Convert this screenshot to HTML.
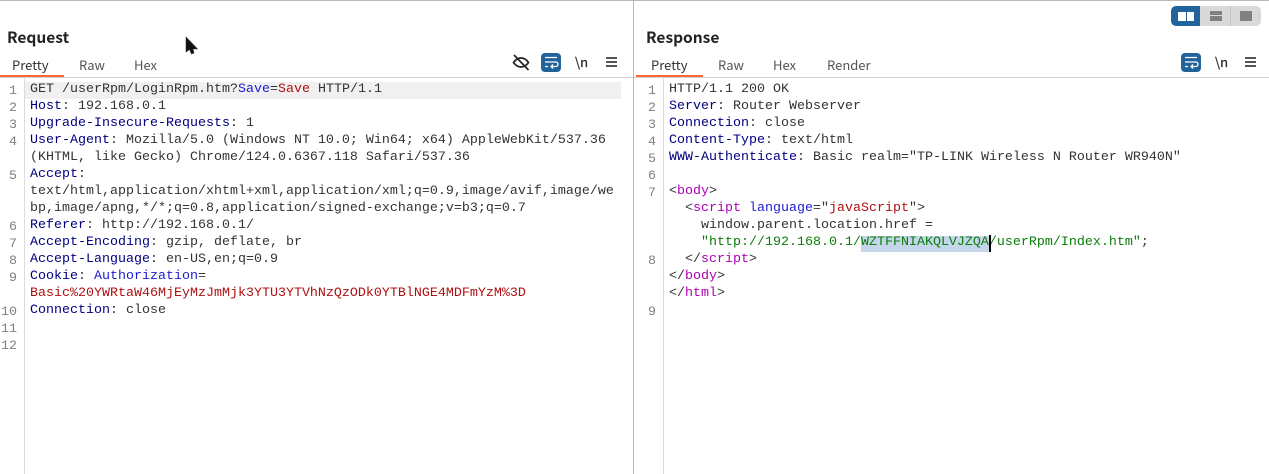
<!DOCTYPE html>
<html><head><meta charset="utf-8">
<style>
html,body{margin:0;padding:0;background:#fff;width:1269px;height:474px;overflow:hidden}
body{position:relative;font-family:"Noto Sans CJK JP","Liberation Sans",sans-serif}
.a{position:absolute}
.l{position:absolute;font:13.33px/17px "Liberation Mono",monospace;color:#333;white-space:pre;height:17px}
.n{position:absolute;font:13.33px/17px "Liberation Mono",monospace;color:#808080;text-align:right;width:16px}
.h{color:#000080}.b{color:#1c1cd0}.r{color:#b01010}.g{color:#0a7d0a}.p{color:#b000b8}
.t{position:absolute;font-family:"Noto Sans CJK JP","Liberation Sans",sans-serif;font-size:13px;line-height:16px;color:#555;top:57px}
.ti{position:absolute;font-family:"Noto Sans CJK JP","Liberation Sans",sans-serif;font-weight:bold;font-size:15.5px;line-height:18px;color:#222;top:28px}
.s{position:absolute;font:13px/17px "Noto Sans CJK JP","Liberation Sans",sans-serif;color:#222;-webkit-text-stroke:.2px #222}
</style></head><body>
<div class="a" style="left:0;top:0;width:1269px;height:1px;background:#b9b9b9"></div>
<div class="a" style="left:633px;top:0;width:1px;height:474px;background:#b9b9b9"></div>
<div class="a" style="left:0;top:77px;width:633px;height:1px;background:#d4d4d4"></div>
<div class="a" style="left:634px;top:77px;width:635px;height:1px;background:#d4d4d4"></div>
<div class="a" style="left:24px;top:78px;width:1px;height:396px;background:#dcdcdc"></div>
<div class="a" style="left:663px;top:78px;width:1px;height:396px;background:#dcdcdc"></div>

<div class="ti" style="left:7px">Request</div>
<div class="ti" style="left:646px">Response</div>

<div class="t" style="left:12px;color:#333">Pretty</div>
<div class="t" style="left:79px">Raw</div>
<div class="t" style="left:134px">Hex</div>
<div class="a" style="left:0;top:75px;width:64px;height:2px;background:#ff6633"></div>
<div class="t" style="left:651px;color:#333">Pretty</div>
<div class="t" style="left:718px">Raw</div>
<div class="t" style="left:773px">Hex</div>
<div class="t" style="left:827px">Render</div>
<div class="a" style="left:636px;top:75px;width:67px;height:2px;background:#ff6633"></div>

<!-- cursor -->
<svg class="a" style="left:185px;top:36px" width="14" height="20" viewBox="0 0 14 20"><path d="M1 1 L1 16 L4.500 13.500 L6.500 18 L9 17 L8 13 L12.500 13 Z" fill="#111" stroke="#333" stroke-width=".6"/></svg>

<!-- layout toggle -->
<div class="a" style="left:1171px;top:6px;width:90px;height:20px;border-radius:5px;background:#d9d9d9"></div>
<div class="a" style="left:1171px;top:6px;width:29px;height:20px;border-radius:5px 0 0 5px;background:#23639c"></div>
<div class="a" style="left:1230px;top:6px;width:1px;height:20px;background:#c6c6c6"></div>
<div class="a" style="left:1178px;top:12px;width:8px;height:9px;background:#fff"></div>
<div class="a" style="left:1187px;top:12px;width:7px;height:9px;background:#fff"></div>
<div class="a" style="left:1210px;top:11px;width:12px;height:4px;background:#808080"></div>
<div class="a" style="left:1210px;top:16px;width:12px;height:5px;background:#808080"></div>
<div class="a" style="left:1240px;top:11px;width:12px;height:10px;background:#808080"></div>

<!-- left icons -->
<svg class="a" style="left:512px;top:53px" width="18" height="18" viewBox="0 0 18 18" fill="none" stroke="#222" stroke-width="1.700"><path d="M1.500 9.500 C4 6 6.500 5 9 5 C11.500 5 14 6 16.500 9.500 C14 13 11.500 14 9 14 C6.500 14 4 13 1.500 9.500 Z"/><path d="M2 2 L16.500 17" stroke-width="1.700"/></svg>
<svg class="a" style="left:541px;top:53px" width="20" height="19" viewBox="0 0 20 19"><rect width="20" height="19" rx="4" fill="#23639c"/><path d="M4 4.500 H16 M4 9 H15 C17.500 9 17.500 13.500 15 13.500 H10 M12 11.500 L10 13.500 L12 15.500 M4 13.500 H7" fill="none" stroke="#fff" stroke-width="1.300"/></svg>
<div class="s" style="left:575px;top:53px">\n</div>
<div class="a" style="left:606px;top:57px;width:11px;height:2px;background:#555"></div>
<div class="a" style="left:606px;top:61px;width:11px;height:2px;background:#555"></div>
<div class="a" style="left:606px;top:65px;width:11px;height:2px;background:#555"></div>

<!-- right icons -->
<svg class="a" style="left:1181px;top:53px" width="20" height="19" viewBox="0 0 20 19"><rect width="20" height="19" rx="4" fill="#23639c"/><path d="M4 4.500 H16 M4 9 H15 C17.500 9 17.500 13.500 15 13.500 H10 M12 11.500 L10 13.500 L12 15.500 M4 13.500 H7" fill="none" stroke="#fff" stroke-width="1.300"/></svg>
<div class="s" style="left:1215px;top:53px">\n</div>
<div class="a" style="left:1245px;top:57px;width:11px;height:2px;background:#555"></div>
<div class="a" style="left:1245px;top:61px;width:11px;height:2px;background:#555"></div>
<div class="a" style="left:1245px;top:65px;width:11px;height:2px;background:#555"></div>

<!-- request -->
<div class="a" style="left:25px;top:82px;width:596px;height:17px;background:#f0f0f0"></div>
<div class="n" style="left:1px;top:83px">1</div>
<div class="n" style="left:1px;top:100px">2</div>
<div class="n" style="left:1px;top:117px">3</div>
<div class="n" style="left:1px;top:134px">4</div>
<div class="n" style="left:1px;top:168px">5</div>
<div class="n" style="left:1px;top:219px">6</div>
<div class="n" style="left:1px;top:236px">7</div>
<div class="n" style="left:1px;top:253px">8</div>
<div class="n" style="left:1px;top:270px">9</div>
<div class="n" style="left:1px;top:304px">10</div>
<div class="n" style="left:1px;top:321px">11</div>
<div class="n" style="left:1px;top:338px">12</div>

<div class="l" style="left:30px;top:81px">GET /userRpm/LoginRpm.htm?<span class="b">Save</span>=<span class="r">Save</span> HTTP/1.1</div>
<div class="l" style="left:30px;top:98px"><span class="h">Host</span>: 192.168.0.1</div>
<div class="l" style="left:30px;top:115px"><span class="h">Upgrade-Insecure-Requests</span>: 1</div>
<div class="l" style="left:30px;top:132px"><span class="h">User-Agent</span>: Mozilla/5.0 (Windows NT 10.0; Win64; x64) AppleWebKit/537.36</div>
<div class="l" style="left:30px;top:149px">(KHTML, like Gecko) Chrome/124.0.6367.118 Safari/537.36</div>
<div class="l" style="left:30px;top:166px"><span class="h">Accept</span>:</div>
<div class="l" style="left:30px;top:183px">text/html,application/xhtml+xml,application/xml;q=0.9,image/avif,image/we</div>
<div class="l" style="left:30px;top:200px">bp,image/apng,*/*;q=0.8,application/signed-exchange;v=b3;q=0.7</div>
<div class="l" style="left:30px;top:217px"><span class="h">Referer</span>: http://192.168.0.1/</div>
<div class="l" style="left:30px;top:234px"><span class="h">Accept-Encoding</span>: gzip, deflate, br</div>
<div class="l" style="left:30px;top:251px"><span class="h">Accept-Language</span>: en-US,en;q=0.9</div>
<div class="l" style="left:30px;top:268px"><span class="h">Cookie</span>: <span class="b">Authorization</span>=</div>
<div class="l r" style="left:30px;top:285px">Basic%20YWRtaW46MjEyMzJmMjk3YTU3YTVhNzQzODk0YTBlNGE4MDFmYzM%3D</div>
<div class="l" style="left:30px;top:302px"><span class="h">Connection</span>: close</div>

<!-- response -->
<div class="n" style="left:640px;top:83px">1</div>
<div class="n" style="left:640px;top:100px">2</div>
<div class="n" style="left:640px;top:117px">3</div>
<div class="n" style="left:640px;top:134px">4</div>
<div class="n" style="left:640px;top:151px">5</div>
<div class="n" style="left:640px;top:168px">6</div>
<div class="n" style="left:640px;top:185px">7</div>
<div class="n" style="left:640px;top:253px">8</div>
<div class="n" style="left:640px;top:304px">9</div>

<div class="l" style="left:669px;top:81px">HTTP/1.1 200 OK</div>
<div class="l" style="left:669px;top:98px"><span class="h">Server</span>: Router Webserver</div>
<div class="l" style="left:669px;top:115px"><span class="h">Connection</span>: close</div>
<div class="l" style="left:669px;top:132px"><span class="h">Content-Type</span>: text/html</div>
<div class="l" style="left:669px;top:149px"><span class="h">WWW-Authenticate</span>: Basic realm="TP-LINK Wireless N Router WR940N"</div>
<div class="l" style="left:669px;top:183px">&lt;<span class="p">body</span>&gt;</div>
<div class="l" style="left:669px;top:200px">  &lt;<span class="p">script</span> <span class="b">language</span>="<span class="r">javaScript</span>"&gt;</div>
<div class="l" style="left:669px;top:217px">    window.parent.location.href =</div>
<div class="a" style="left:861px;top:236px;width:129px;height:16px;background:#c5d6ea"></div>
<div class="l g" style="left:669px;top:234px">    "http://192.168.0.1/WZTFFNIAKQLVJZQA/userRpm/Index.htm"<span style="color:#333">;</span></div>
<div class="a" style="left:989px;top:235px;width:2px;height:17px;background:#000"></div>
<div class="l" style="left:669px;top:251px">  &lt;/<span class="p">script</span>&gt;</div>
<div class="l" style="left:669px;top:268px">&lt;/<span class="p">body</span>&gt;</div>
<div class="l" style="left:669px;top:285px">&lt;/<span class="p">html</span>&gt;</div>
</body></html>
